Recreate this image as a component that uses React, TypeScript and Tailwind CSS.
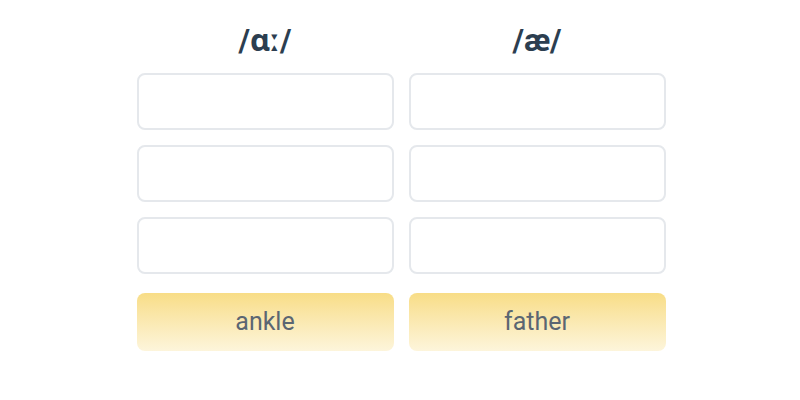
export default function App() {
  const cols = [
    { head: <>/ɑ<span style={{ fontFamily: "'DejaVu Sans', sans-serif" }}>ː</span>/</>, word: "ankle" },
    { head: <>/æ/</>, word: "father" },
  ];
  return (
    <div className="w-[800px] h-[400px] bg-white flex justify-center" style={{ fontFamily: "Roboto, 'Noto Sans', sans-serif" }}>
      <div className="flex gap-[15px] pl-[2px] pt-[21px]">
        {cols.map((c) => (
          <div key={c.word} className="w-[257px] flex flex-col">
            <div className="h-[38px] flex items-center justify-center text-[31px] font-bold text-[#2c3e50] leading-none">
              {c.head}
            </div>
            <div className="mt-[14px] flex flex-col gap-[15px]">
              <div className="h-[57px] rounded-[8px] border-2 border-[#e5e8ec] bg-white" />
              <div className="h-[57px] rounded-[8px] border-2 border-[#e5e8ec] bg-white" />
              <div className="h-[57px] rounded-[8px] border-2 border-[#e5e8ec] bg-white" />
            </div>
            <div className="mt-[19px] h-[58px] rounded-[8px] bg-gradient-to-b from-[#f8dd86] to-[#fdf5db] flex items-center justify-center text-[25px] text-[#5b6672]">
              {c.word}
            </div>
          </div>
        ))}
      </div>
    </div>
  );
}
